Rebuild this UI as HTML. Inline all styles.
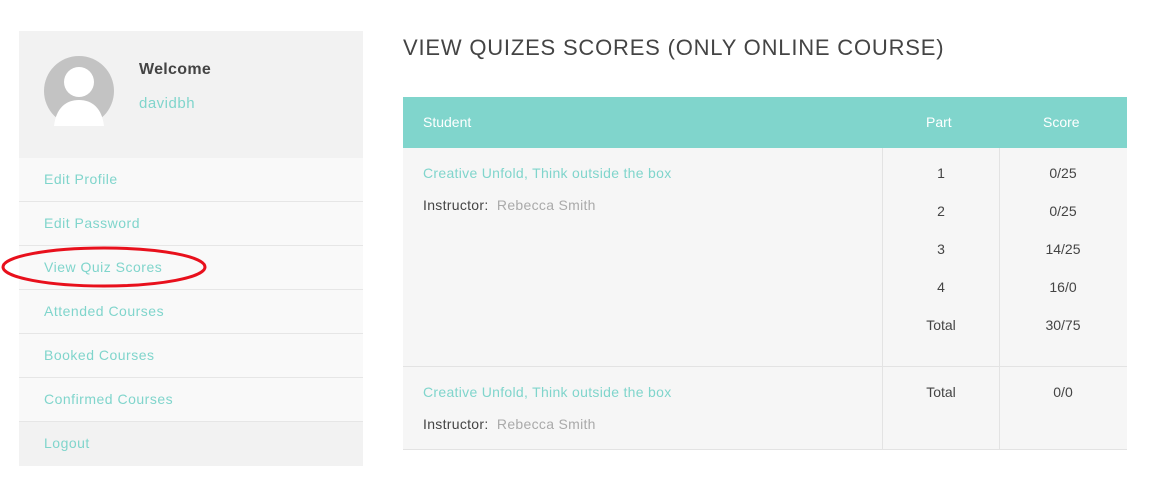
<!DOCTYPE html>
<html><head><style>
body{margin:0;width:1162px;height:488px;background:#fff;font-family:"Liberation Sans",sans-serif;position:relative;overflow:hidden}
.a{position:absolute}
.side{left:19px;top:31px;width:344px}
.head{height:127px;background:#f2f2f2;position:relative}
.item{height:43px;background:#f9f9f9;border-bottom:1px solid #e6e6e6;color:#80d5cc;font-size:14px;line-height:43px;padding-left:25px;letter-spacing:.5px}
.t{color:#444;font-size:14px}
.teal{color:#80d5cc}
</style></head><body>
<div class="a side">
 <div class="head">
  <svg class="a" style="left:25px;top:25px" width="70" height="70" viewBox="0 0 70 70">
   <ellipse cx="35" cy="35" rx="35" ry="35" fill="#c3c3c3"/>
   <circle cx="35" cy="26" r="15" fill="#fff"/>
   <path d="M10 70 C12 52 22 44 35 44 C48 44 58 52 60 70 Z" fill="#fff"/>
  </svg>
  <div class="a" style="left:120px;top:30px;font-weight:bold;font-size:16px;color:#444;letter-spacing:.3px">Welcome</div>
  <div class="a teal" style="left:120px;top:64px;font-size:15px;letter-spacing:.5px">davidbh</div>
 </div>
 <div class="item">Edit Profile</div>
 <div class="item">Edit Password</div>
 <div class="item">View Quiz Scores</div>
 <div class="item">Attended Courses</div>
 <div class="item">Booked Courses</div>
 <div class="item">Confirmed Courses</div>
 <div class="item" style="background:#f2f2f2;border:0;height:44px">Logout</div>
</div>
<svg class="a" style="left:0;top:240px" width="215" height="55"><ellipse cx="104" cy="27" rx="101" ry="19" fill="none" stroke="#e8101c" stroke-width="3"/></svg>
<div class="a" style="left:403px;top:35px;font-size:22px;color:#444;letter-spacing:.8px">VIEW QUIZES SCORES (ONLY ONLINE COURSE)</div>
<div class="a" style="left:403px;top:97px;width:724px;height:51px;background:#80d5cc;color:#fff;font-size:14px">
 <span class="a" style="left:20px;top:17px">Student</span>
 <span class="a" style="left:523px;top:17px">Part</span>
 <span class="a" style="left:640px;top:17px">Score</span>
</div>
<div class="a" style="left:403px;top:148px;width:724px;height:218px;background:#f6f6f6;border-bottom:1px solid #e3e3e3"></div>
<div class="a" style="left:403px;top:367px;width:724px;height:82px;background:#f6f6f6;border-bottom:1px solid #e3e3e3"></div>
<div class="a" style="left:882px;top:148px;width:1px;height:301px;background:#e3e3e3"></div>
<div class="a" style="left:999px;top:148px;width:1px;height:301px;background:#e3e3e3"></div>
<div class="a teal" style="left:423px;top:165px;font-size:14px;letter-spacing:.3px">Creative Unfold, Think outside the box</div>
<div class="a t" style="left:423px;top:197px;letter-spacing:.3px">Instructor:&nbsp; <span style="color:#aaa">Rebecca Smith</span></div>
<div class="a teal" style="left:423px;top:384px;font-size:14px;letter-spacing:.3px">Creative Unfold, Think outside the box</div>
<div class="a t" style="left:423px;top:416px;letter-spacing:.3px">Instructor:&nbsp; <span style="color:#aaa">Rebecca Smith</span></div>
<div class="a t" style="left:883px;width:116px;top:154px;text-align:center;line-height:38px">1<br>2<br>3<br>4<br>Total</div>
<div class="a t" style="left:1000px;width:126px;top:154px;text-align:center;line-height:38px">0/25<br>0/25<br>14/25<br>16/0<br>30/75</div>
<div class="a t" style="left:883px;width:116px;top:384px;text-align:center">Total</div>
<div class="a t" style="left:1000px;width:126px;top:384px;text-align:center">0/0</div>
</body></html>
